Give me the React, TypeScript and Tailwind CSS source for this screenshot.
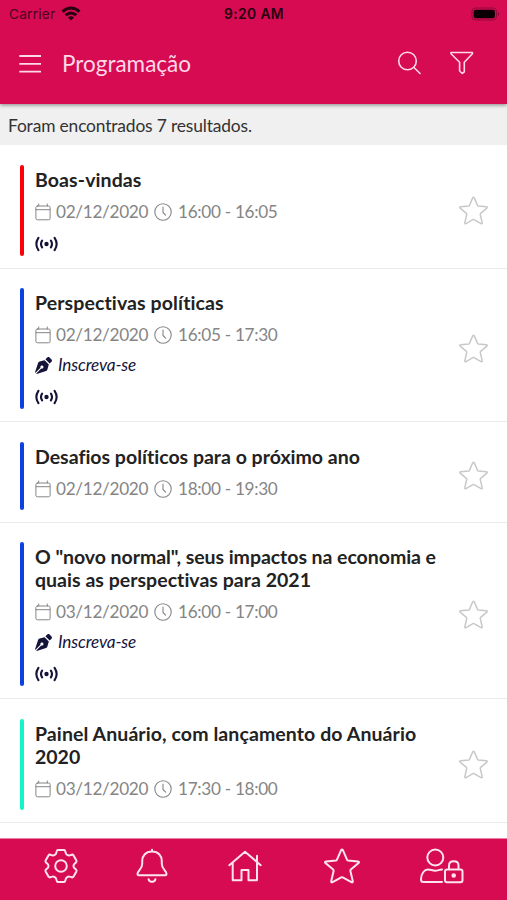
import React from "react";
import { FaPenNib } from "react-icons/fa";

type Line = { text: string; tracking: string };

type Session = {
  title: Line[];
  date: string;
  time: string;
  bar: string;
  signup?: boolean;
  live?: boolean;
};

const sessions: Session[] = [
  {
    title: [{ text: "Boas-vindas", tracking: "tracking-[0.1px]" }],
    date: "02/12/2020",
    time: "16:00 - 16:05",
    bar: "bg-[#fb0007]",
    live: true,
  },
  {
    title: [{ text: "Perspectivas políticas", tracking: "tracking-[0.11px]" }],
    date: "02/12/2020",
    time: "16:05 - 17:30",
    bar: "bg-[#0b41e0]",
    signup: true,
    live: true,
  },
  {
    title: [{ text: "Desafios políticos para o próximo ano", tracking: "tracking-normal" }],
    date: "02/12/2020",
    time: "18:00 - 19:30",
    bar: "bg-[#0b41e0]",
  },
  {
    title: [
      { text: 'O "novo normal", seus impactos na economia e', tracking: "tracking-[-0.05px]" },
      { text: "quais as perspectivas para 2021", tracking: "tracking-[0.03px]" },
    ],
    date: "03/12/2020",
    time: "16:00 - 17:00",
    bar: "bg-[#0b41e0]",
    signup: true,
    live: true,
  },
  {
    title: [
      { text: "Painel Anuário, com lançamento do Anuário", tracking: "tracking-[0.09px]" },
      { text: "2020", tracking: "tracking-normal" },
    ],
    date: "03/12/2020",
    time: "17:30 - 18:00",
    bar: "bg-[#12f5c4]",
  },
];

const stroke = {
  fill: "none",
  stroke: "currentColor",
  strokeLinecap: "round" as const,
  strokeLinejoin: "round" as const,
};

function Star({ className, width }: { className: string; width: number }) {
  return (
    <svg viewBox="0 0 36 36" className={className} {...stroke} strokeWidth={width}>
      <path d="M17 2.3Q18 .8 19 2.3L23 11.6Q23.3 12.3 24 12.4L34 13.4Q35.7 13.8 34.6 15L26.8 21.6Q26.2 22.2 26.4 23L28.8 33.2Q28.9 34.9 27.4 34.2L18.7 29.4Q18 29 17.3 29.4L8.6 34.2Q7.1 34.9 7.2 33.2L9.6 23Q9.8 22.2 9.2 21.6L1.4 15Q.3 13.8 2 13.4L12 12.4Q12.7 12.3 13 11.6Z" />
    </svg>
  );
}

function Calendar() {
  return (
    <svg viewBox="0 0 16 18" className="h-[18px] w-4 shrink-0" {...stroke} strokeWidth={1}>
      <rect x=".9" y="3" width="14.2" height="13.8" rx="1.5" />
      <path d="M1 6.7H15M3.7 1V3M12.3 1V3" />
    </svg>
  );
}

function Clock() {
  return (
    <svg viewBox="0 0 18 18" className="h-[18px] w-[18px] shrink-0" {...stroke} strokeWidth={1.1}>
      <circle cx="9" cy="9" r="8.2" />
      <path d="M9 4V9.5L11.6 12.2" />
    </svg>
  );
}

function Live() {
  return (
    <svg viewBox="0 0 23 16" className="h-4 w-[23px]" {...stroke} strokeWidth={2.1}>
      <circle cx="11.5" cy="8" r="2.2" fill="currentColor" stroke="none" />
      <path d="M3.4 1.9Q-.7 8 3.4 14.1M19.6 1.9Q23.7 8 19.6 14.1M7.1 4.7Q4.9 8 7.1 11.3M15.9 4.7Q18.1 8 15.9 11.3" />
    </svg>
  );
}

function SessionRow({ s }: { s: Session }) {
  return (
    <li className="flex items-stretch border-b border-[#ebebeb] pt-[19.6px] pb-3 pl-5">
      <div className={`w-[4px] shrink-0 rounded-full ${s.bar}`} />
      <div className="min-w-0 flex-1 pt-[3px] pl-[11px]">
        <h2 className="text-[19.5px] leading-[23px] font-bold whitespace-nowrap text-[#222] [font-variant-ligatures:none]">
          {s.title.map((line) => (
            <span key={line.text} className={`block ${line.tracking}`}>{line.text}</span>
          ))}
        </h2>
        <div className={`mt-[5px] flex h-8 items-center text-[17.2px] tracking-[-0.31px] text-[#858585] ${s.live ? "" : "mb-[5px]"}`}>
          <Calendar />
          <span className="ml-[5px] w-[93px] whitespace-nowrap">{s.date}</span>
          <span className="ml-[5px] flex"><Clock /></span>
          <span className="ml-[6px] whitespace-nowrap">{s.time}</span>
        </div>
        {s.signup && (
          <div className="flex h-[30px] items-center pb-[2px] text-[17.2px] tracking-[-0.15px] text-[#14133a] italic">
            <FaPenNib className="h-[17px] w-[17px]" />
            <span className="ml-[6px]">Inscreva-se</span>
          </div>
        )}
        {s.live && (
          <div className="flex h-7 items-end pb-1 text-[#14133a]">
            <Live />
          </div>
        )}
      </div>
      <div className="flex w-[48px] shrink-0 items-center text-[#c8c8c8]">
        <Star className="h-[29px] w-[29px]" width={1.8} />
      </div>
    </li>
  );
}

function StatusBar() {
  return (
    <div className="grid h-7 grid-cols-3 items-center pr-[6px] pl-[9px] text-[#26010e]">
      <div className="flex items-center gap-[6px] text-[13.7px] text-[#4a041e]">
        <span className="tracking-[0.2px]">Carrier</span>
        <svg viewBox="0 0 20 15" className="h-[15px] w-5 text-[#26010e]" fill="none" stroke="currentColor" strokeWidth="3">
          <path d="M1.5 5.7Q10 -1.7 18.5 5.7M4.7 9.2Q10 4.7 15.3 9.2" />
          <path d="M7 11.4Q10 9 13 11.4L10 14.5Z" fill="currentColor" stroke="none" />
        </svg>
      </div>
      <div className="pr-[2px] text-center text-[13.8px] font-semibold tracking-[0.4px] whitespace-nowrap">9:20 AM</div>
      <svg viewBox="0 0 30 14" className="h-[14px] w-[30px] justify-self-end">
        <rect x="1" y="1" width="24.5" height="12" rx="3.5" fill="none" stroke="#90083a" />
        <rect x="2.7" y="2.7" width="21.2" height="8.6" rx="2" fill="#0a0003" />
        <path d="M27 5Q29.5 7 27 9Z" fill="#90083a" />
      </svg>
    </div>
  );
}

function TabBar() {
  return (
    <nav className="flex h-[62px] shrink-0 border-t border-[#ef7ca5] bg-[#d60b52] pt-[9px] text-[#ffe3ee]">
      <svg viewBox="0 0 36 36" className="ml-[43px] h-9 w-9" {...stroke} strokeWidth={2}>
        <path d="M14.8 2H21.2Q22 2 22.2 3.2L22.9 5.3Q23 6.1 24.3 6.9Q25.6 7.8 26.6 7.4L28.8 6.7Q29.8 6.4 30.4 7.3L33.4 12.6Q33.9 13.6 33 14.4L31.3 16Q30.5 16.7 30.5 18T31.3 20L33 21.6Q33.9 22.4 33.4 23.4L30.4 28.7Q29.8 29.6 28.8 29.3L26.6 28.6Q25.6 28.2 24.3 29.1Q23 29.9 22.9 30.7L22.2 32.8Q22 34 21.2 34H14.8Q14 34 13.8 32.8L13.1 30.7Q13 29.9 11.7 29.1Q10.4 28.2 9.4 28.6L7.2 29.3Q6.2 29.6 5.6 28.7L2.6 23.4Q2.1 22.4 3 21.6L4.7 20Q5.5 19.3 5.5 18T4.7 16L3 14.4Q2.1 13.6 2.6 12.6L5.6 7.3Q6.2 6.4 7.2 6.7L9.4 7.4Q10.4 7.8 11.7 6.9Q13 6.1 13.1 5.3L13.8 3.2Q14 2 14.8 2Z" />
        <circle cx="18" cy="18" r="5.8" />
      </svg>
      <svg viewBox="0 0 36 36" className="ml-[55px] h-9 w-9" {...stroke} strokeWidth={2}>
        <path d="M18 1.8V3.5M18 3.5C11.8 3.5 8.2 7.8 8.2 13V16C8.2 21 3.5 23 3.5 25.7Q3.5 27.2 5 27.2H31Q32.5 27.2 32.5 25.7C32.5 23 27.8 21 27.8 16V13C27.8 7.8 24.2 3.5 18 3.5ZM14.6 31.3Q15.5 33.8 18 33.8T21.4 31.3" />
      </svg>
      <svg viewBox="0 0 36 36" className="ml-[57px] h-9 w-9" {...stroke} strokeWidth={2}>
        <path d="M2.3 17.2L18 3.7L33.7 17.2M5.7 14.8V32.2H14.5V22H21.5V32.2H30V14.8M30 13.5V7.8" />
      </svg>
      <div className="ml-[61px] h-9 w-9"><Star className="h-9 w-9" width={2} /></div>
      <svg viewBox="0 0 46 36" className="ml-[59px] h-9 w-[46px]" {...stroke} strokeWidth={2}>
        <circle cx="16.3" cy="9.5" r="8" />
        <path d="M23 34H4.4Q2 34 2 31.5C2 25.5 5.5 21.5 9 21.5C12 21.5 13 22.7 16.3 22.7C19 22.7 20 21.5 23 21.5" />
        <rect x="26" y="21.5" width="17.5" height="12.8" rx="2" />
        <path d="M30 21V17.5Q30 13.3 34.75 13.3T39.5 17.5V21" />
        <circle cx="34.7" cy="27.5" r="1.3" fill="currentColor" />
      </svg>
    </nav>
  );
}

export default function App() {
  return (
    <div className="flex h-[900px] w-[507px] flex-col overflow-hidden bg-white font-['Lato',sans-serif]">
      <header className="z-10 h-[103.5px] shrink-0 bg-[#d60b52] shadow-[0_1px_4px_rgba(0,0,0,0.45)]">
        <div className="font-['Inter',sans-serif]"><StatusBar /></div>
        <div className="flex h-[71px] items-center pl-[19px] text-[#ffd9e7]">
          <svg viewBox="0 0 23 20" className="h-5 w-[23px]" {...stroke} strokeLinecap="butt" strokeWidth={1.8}>
            <path d="M.3 2H22M.3 9.8H22M.3 17.7H22" />
          </svg>
          <h1 className="ml-5 w-[335px] text-[22.5px] leading-7">Programação</h1>
          <svg viewBox="0 0 26 26" className="mb-px h-[26px] w-[26px]" {...stroke} strokeWidth={1.6}>
            <circle cx="10.5" cy="11" r="8.8" />
            <path d="M17 17.5L23 23.5" />
          </svg>
          <svg viewBox="0 0 26 26" className="mb-px ml-[26px] h-[26px] w-[26px]" {...stroke} strokeWidth={1.6}>
            <path d="M2 2.5H23.4V3.8L15.3 12.2V21.8L13.3 23.5L10.6 21V12.2L2 3.8Z" />
          </svg>
        </div>
      </header>
      <div className="flex h-[41.5px] shrink-0 items-center bg-[#f0f0f0] pt-[3px] pl-2 text-[17.4px] tracking-[-0.16px] text-[#333]">
        Foram encontrados 7 resultados.
      </div>
      <ul className="min-h-0 flex-1 overflow-hidden">
        {sessions.map((s) => (
          <SessionRow key={s.title[0].text} s={s} />
        ))}
      </ul>
      <TabBar />
    </div>
  );
}
